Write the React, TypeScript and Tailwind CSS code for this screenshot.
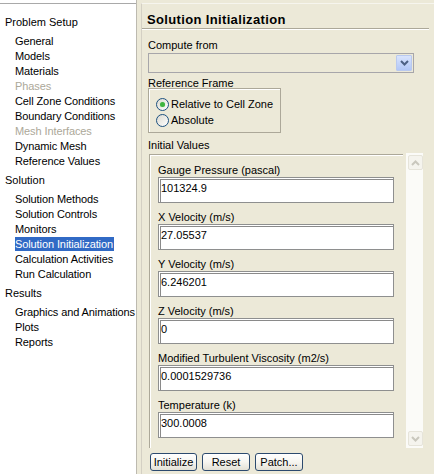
import React from 'react';

type NavItem = { label: string; off?: boolean; active?: boolean };

const nav: { title: string; items: NavItem[] }[] = [
  {
    title: 'Problem Setup',
    items: [
      { label: 'General' },
      { label: 'Models' },
      { label: 'Materials' },
      { label: 'Phases', off: true },
      { label: 'Cell Zone Conditions' },
      { label: 'Boundary Conditions' },
      { label: 'Mesh Interfaces', off: true },
      { label: 'Dynamic Mesh' },
      { label: 'Reference Values' },
    ],
  },
  {
    title: 'Solution',
    items: [
      { label: 'Solution Methods' },
      { label: 'Solution Controls' },
      { label: 'Monitors' },
      { label: 'Solution Initialization', active: true },
      { label: 'Calculation Activities' },
      { label: 'Run Calculation' },
    ],
  },
  {
    title: 'Results',
    items: [{ label: 'Graphics and Animations' }, { label: 'Plots' }, { label: 'Reports' }],
  },
];

const fields = [
  ['Gauge Pressure (pascal)', '101324.9'],
  ['X Velocity (m/s)', '27.05537'],
  ['Y Velocity (m/s)', '6.246201'],
  ['Z Velocity (m/s)', '0'],
  ['Modified Turbulent Viscosity (m2/s)', '0.0001529736'],
  ['Temperature (k)', '300.0008'],
];

function Chevron({ up, color }: { up?: boolean; color: string }) {
  return (
    <svg width="9" height="6" viewBox="0 0 9 6" className={up ? 'rotate-180' : ''}>
      <path d="M1 1 L4.5 4.5 L8 1" fill="none" stroke={color} strokeWidth="2" />
    </svg>
  );
}

function Radio({ checked, label }: { checked?: boolean; label: string }) {
  return (
    <div className="flex h-[16px] items-center">
      <span className="flex size-[13px] items-center justify-center rounded-full border border-[#1c5180] bg-gradient-to-br from-[#dcdad0] to-white">
        {checked && <span className="size-[5px] rounded-full bg-[#3fb43f] shadow-[0_0_1px_#9be09b]" />}
      </span>
      <span className="ml-[2px]">{label}</span>
    </div>
  );
}

function XpButton({ children, w }: { children: React.ReactNode; w: string }) {
  return (
    <button
      className={`${w} h-[18px] rounded-[3px] border border-[#2c4a6e] bg-gradient-to-b from-white via-[#f6f5f0] to-[#e3e1d6] text-[11px] leading-[14px] text-black`}
    >
      {children}
    </button>
  );
}

export default function App() {
  return (
    <div className="flex h-[474px] w-[434px] overflow-hidden whitespace-nowrap bg-[#ece9d8] font-['Liberation_Sans',Arial,sans-serif] text-[11px] text-black">
      {/* navigation tree */}
      <div className="h-full w-[137px] shrink-0 border-r border-[#bdbab0] bg-white pt-[3px]">
        <div className="h-full border-t border-[#a9a9a9] pt-[7px]">
          {nav.map((sec) => (
            <div key={sec.title}>
              <div className="my-[4px] h-[15px] pl-[5px] leading-[15px]">{sec.title}</div>
              {sec.items.map((it) => (
                <div key={it.label} className="h-[15px] pl-[15px] leading-[15px] tracking-[-0.1px]">
                  <span
                    className={
                      it.active
                        ? 'inline-block h-[14px] bg-[#316ac5] pr-[1px] leading-[14px] text-white'
                        : it.off
                          ? 'text-[#aca899]'
                          : ''
                    }
                  >
                    {it.label}
                  </span>
                </div>
              ))}
            </div>
          ))}
        </div>
      </div>

      {/* task page */}
      <div className="flex-1 pl-[4px] pt-[3px]">
        <div className="h-full border-l border-t border-[#d4d0c4] border-t-[#f6f5ee]">
          <div className="mr-[5px] h-[25px] border-b border-[#aca899] pl-[5px] pt-[8px] text-[13px] font-bold leading-[16px] tracking-[0.35px] shadow-[0_1px_0_#fff]">
            Solution Initialization
          </div>

          <div className="pl-[6px]">
            <div className="mt-[9px] h-[15px] leading-[14px]">Compute from</div>
            <div className="flex h-[20px] w-[266px] border border-[#a7a6aa] bg-[#ece9d8] p-[1px]">
              <div className="flex-1" />
              <div className="flex w-[16px] items-center justify-center rounded-[1px] border border-[#b9c9ef] bg-gradient-to-b from-[#d9e4fd] to-[#b2c7f7]">
                <Chevron color="#4d6185" />
              </div>
            </div>

            <div className="mt-[3px] h-[12px] leading-[14px]">Reference Frame</div>
            <div className="h-[45px] w-[133px] border border-[#aca899] pl-[7px] pt-[7px] shadow-[inset_1px_1px_0_#fff]">
              <Radio checked label="Relative to Cell Zone" />
              <Radio label="Absolute" />
            </div>

            <div className="mt-[5px] h-[15px] leading-[14px]">Initial Values</div>
            <div className="flex h-[295px] w-[275px]">
              <div className="w-[258px] overflow-hidden pl-[1px] pt-[1px]">
                <div className="h-[320px] w-[254px] border-l border-t border-[#aca899] pl-[8px] pt-[8px] shadow-[inset_1px_1px_0_#fff]">
                  {fields.map(([label, value]) => (
                    <div key={label} className="mb-[7px]">
                      <div className="h-[14px] leading-[14px]">{label}</div>
                      <div className="h-[26px] w-[236px] border border-[#8e8f8f] bg-white pl-[2px] pt-[3px] leading-[14px] shadow-[inset_1px_1px_0_#fff,inset_2px_2px_0_#8a8a8a]">
                        {value}
                      </div>
                    </div>
                  ))}
                </div>
              </div>
              <div className="flex w-[17px] flex-col justify-between bg-[#fbfbf8] py-[2px] pl-[2px]">
                <div className="flex size-[15px] items-center justify-center rounded-[2px] border border-[#e6e4da] bg-[#f5f4ee]">
                  <Chevron up color="#c9c7bd" />
                </div>
                <div className="flex size-[15px] items-center justify-center rounded-[2px] border border-[#e6e4da] bg-[#f5f4ee]">
                  <Chevron color="#c9c7bd" />
                </div>
              </div>
            </div>

            <div className="mt-[5px] flex gap-[5px] pl-[2px]">
              <XpButton w="w-[47px]">Initialize</XpButton>
              <XpButton w="w-[48px]">Reset</XpButton>
              <XpButton w="w-[48px]">Patch...</XpButton>
            </div>
          </div>
        </div>
      </div>
    </div>
  );
}
